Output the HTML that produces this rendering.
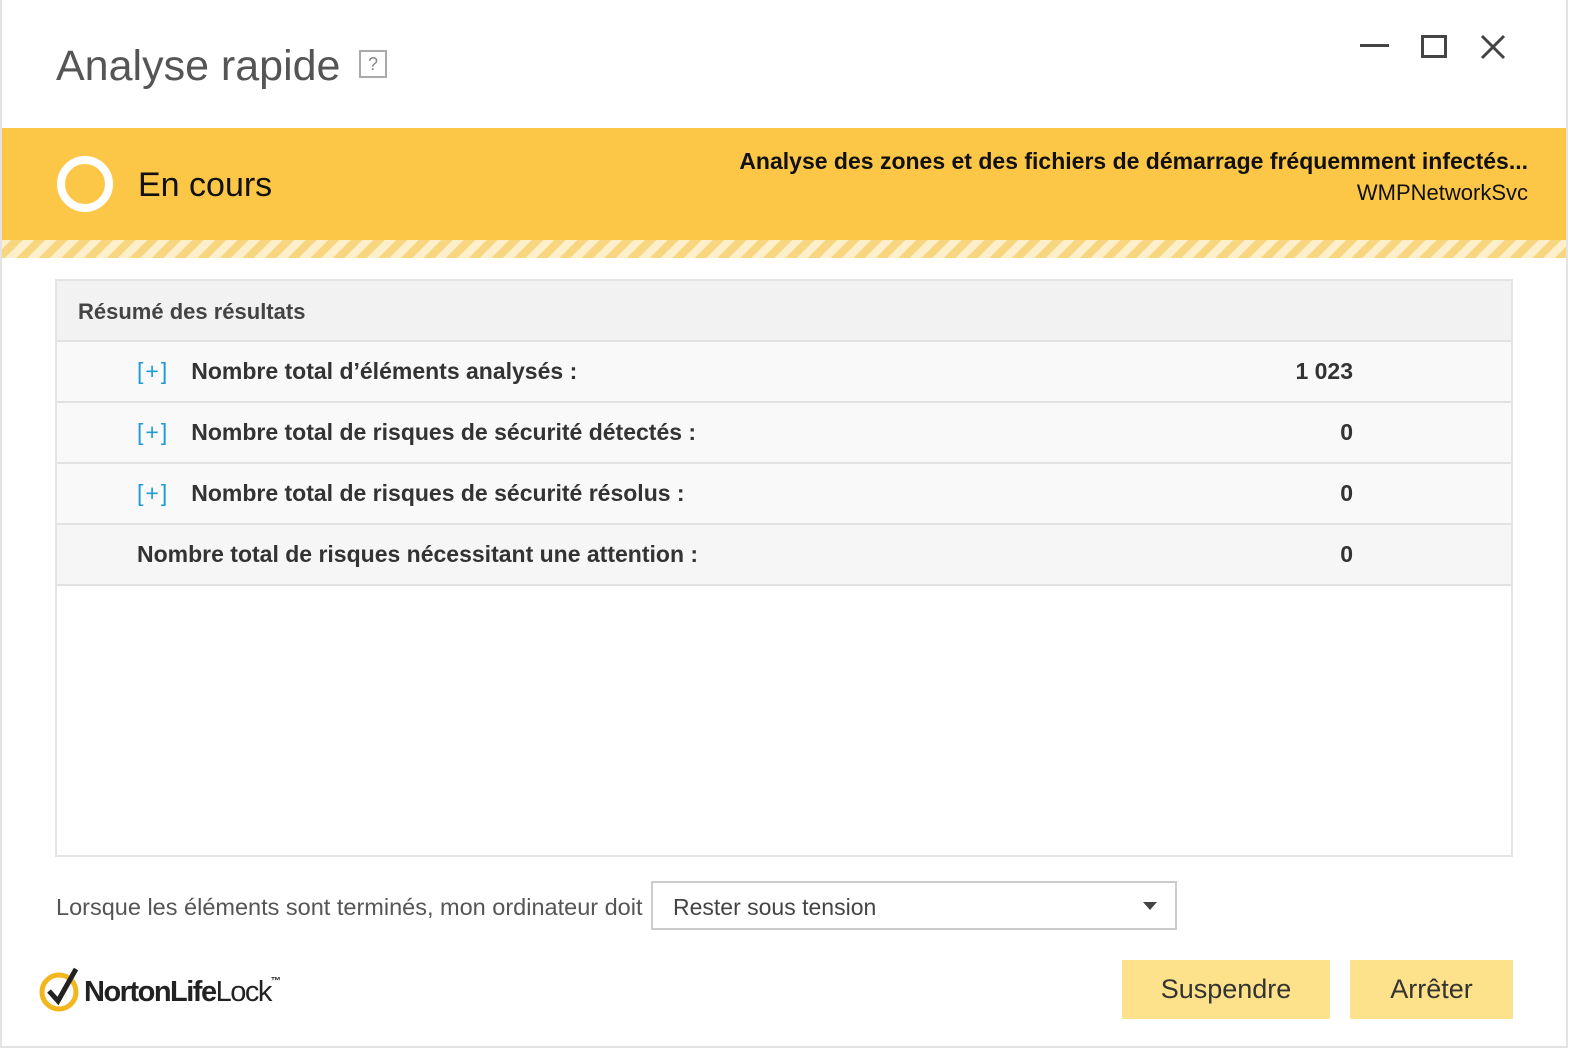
<!DOCTYPE html>
<html><head><meta charset="utf-8"><style>
*{margin:0;padding:0;box-sizing:border-box}
body{width:1588px;height:1060px;background:#fff;font-family:"Liberation Sans",sans-serif;position:relative;overflow:hidden}
.win{position:absolute;left:0;top:0;width:1568px;height:1048px;border:2px solid #e3e3e3;border-top:none}
.t{position:absolute;white-space:nowrap}
.band{position:absolute;left:2px;top:128px;width:1564px;height:112px;background:#fcc647}
.stripe{position:absolute;left:2px;top:240px;width:1564px;height:18px;background:repeating-linear-gradient(-45deg,#f8d67f 0 8px,#fcefca 8px 16px)}
.panel{position:absolute;left:55px;top:279px;width:1458px;height:578px;border:2px solid #e4e4e4}
.hdr{height:61px;background:#f2f2f2;border-bottom:2px solid #e2e2e2}
.row{height:61px;background:#f9f9f9;border-bottom:2px solid #e2e2e2;position:relative}
.row .l{position:absolute;left:80px;top:16px;font-weight:bold;font-size:23px;color:#333}
.row .p{color:#1e9cd7;font-weight:normal;margin-right:22px;letter-spacing:2px}
.row .v{position:absolute;right:158px;top:16px;font-weight:bold;font-size:23px;color:#333}
.btn{position:absolute;top:960px;height:59px;background:#fde18b;font-size:27px;color:#333;text-align:center;line-height:59px}
</style></head><body>
<div class="win"></div>
<div class="t" style="left:56px;top:42px;font-size:43px;color:#555">Analyse rapide</div>
<div class="t" style="left:359px;top:50px;width:28px;height:28px;border:2px solid #aaa;color:#888;font-size:18px;text-align:center;line-height:24px">?</div>
<div style="position:absolute;left:1360px;top:44px;width:29px;height:3px;background:#444"></div>
<div style="position:absolute;left:1421px;top:35px;width:26px;height:23px;border:3px solid #444"></div>
<svg style="position:absolute;left:1480px;top:34px" width="26" height="26"><path d="M2 2L24 24M24 2L2 24" stroke="#444" stroke-width="3"/></svg>
<div class="band"></div>
<div class="stripe"></div>
<div style="position:absolute;left:57px;top:156px;width:56px;height:56px;border-radius:50%;border:8px solid #fff"></div>
<div class="t" style="left:138px;top:166px;font-size:34px;color:#111">En cours</div>
<div class="t" style="right:60px;top:148px;font-size:23px;font-weight:bold;color:#111">Analyse des zones et des fichiers de démarrage fréquemment infectés...</div>
<div class="t" style="right:60px;top:180px;font-size:22px;color:#111">WMPNetworkSvc</div>
<div class="panel">
<div class="hdr"><div class="t" style="left:21px;top:18px;font-size:22px;font-weight:bold;color:#444">Résumé des résultats</div></div>
<div class="row"><div class="t l"><span class="p">[+]</span>Nombre total d’éléments analysés :</div><div class="t v">1 023</div></div>
<div class="row"><div class="t l"><span class="p">[+]</span>Nombre total de risques de sécurité détectés :</div><div class="t v">0</div></div>
<div class="row"><div class="t l"><span class="p">[+]</span>Nombre total de risques de sécurité résolus :</div><div class="t v">0</div></div>
<div class="row" style="background:#f6f6f6"><div class="t l">Nombre total de risques nécessitant une attention :</div><div class="t v">0</div></div>
</div>
<div class="t" style="left:56px;top:894px;font-size:23.5px;color:#555">Lorsque les éléments sont terminés, mon ordinateur doit</div>
<div style="position:absolute;left:651px;top:881px;width:526px;height:49px;border:2px solid #ccc"></div>
<div class="t" style="left:673px;top:894px;font-size:23px;color:#444">Rester sous tension</div>
<svg style="position:absolute;left:1142px;top:901px" width="16" height="10"><path d="M1 1L15 1L8 9Z" fill="#444"/></svg>
<svg style="position:absolute;left:38px;top:966px" width="48" height="48"><circle cx="21" cy="26" r="17" fill="none" stroke="#f2b61e" stroke-width="5"/><path d="M11 25L20 35L38 3" fill="none" stroke="#222" stroke-width="5"/></svg>
<div class="t" style="left:84px;top:976px;font-size:29px;font-weight:bold;color:#222;letter-spacing:-1.5px">NortonLife<span style="font-weight:normal">Lock</span><span style="font-size:10px;vertical-align:top">™</span></div>
<div class="btn" style="left:1122px;width:208px">Suspendre</div>
<div class="btn" style="left:1350px;width:163px">Arrêter</div>
</body></html>
